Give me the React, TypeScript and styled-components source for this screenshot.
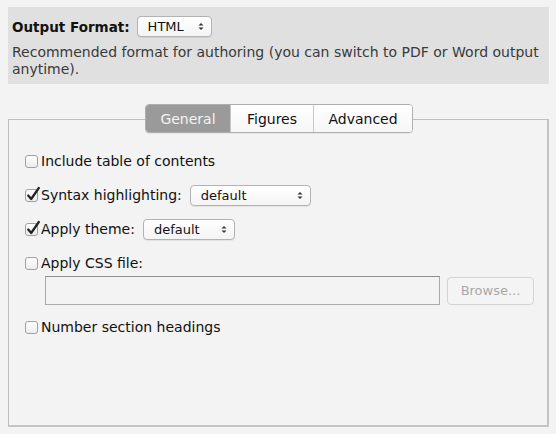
import React from "react";
import styled, { createGlobalStyle } from "styled-components";

const Global = createGlobalStyle`
  html, body { margin: 0; padding: 0; background: #f2f3f2; }
  body { font-family: "DejaVu Sans", "Liberation Sans", sans-serif; font-size: 13px; color: #111; }
`;

const Page = styled.div`
  width: 556px;
  height: 434px;
  padding: 7px 7px 0 8px;
  box-sizing: border-box;
  display: flex;
  flex-direction: column;
`;

const Header = styled.div`
  background: #e0e0e0;
  height: 77px;
  flex-shrink: 0;
  box-sizing: border-box;
  padding: 9px 0 0 4px;
  color: #333;
`;

const FormatRow = styled.div`
  display: flex;
  align-items: center;
  gap: 7px;
  height: 21px;
`;

const BoldLabel = styled.span`
  font-weight: bold;
  color: #111;
  font-size: 13.5px;
`;

const Description = styled.div`
  margin-top: 7px;
  line-height: 17px;
  font-size: 14px;
  color: #3a3a3a;
`;

const SelectBox = styled.div<{ $w: number }>`
  width: ${(p) => p.$w}px;
  height: 21px;
  box-sizing: border-box;
  border: 1px solid #b2b2b2;
  border-radius: 4px;
  background: linear-gradient(#ffffff, #f4f4f4);
  box-shadow: 0 1px 0 rgba(0, 0, 0, 0.06);
  display: flex;
  align-items: center;
  justify-content: space-between;
  padding: 0 7px 0 10px;
  font-size: 13px;
  color: #111;
  font-weight: normal;
`;

const Arrows = () => (
  <svg width="6" height="9" viewBox="0 0 6 9">
    <path d="M0.5 3.5 L3 1 L5.5 3.5 Z" fill="#333" />
    <path d="M0.5 5.5 L3 8 L5.5 5.5 Z" fill="#333" />
  </svg>
);

const Select = ({ w, value }: { w: number; value: string }) => (
  <SelectBox $w={w}>
    <span>{value}</span>
    <Arrows />
  </SelectBox>
);

const TabBar = styled.div`
  margin-top: 20px;
  display: flex;
  justify-content: center;
  position: relative;
  z-index: 1;
  padding-left: 1px;
`;

const TabGroup = styled.div`
  display: flex;
  border: 1px solid #aeaeae;
  border-radius: 4px;
  overflow: hidden;
  height: 29px;
  box-sizing: border-box;
  background: #fff;
  box-shadow: 0 1px 0 rgba(0, 0, 0, 0.05);
`;

const Tab = styled.div<{ $active?: boolean; $w: number }>`
  width: ${(p) => p.$w}px;
  display: flex;
  align-items: center;
  justify-content: center;
  font-size: 14px;
  color: ${(p) => (p.$active ? "#f4f4f4" : "#111")};
  background: ${(p) => (p.$active ? "#9a9a9a" : "linear-gradient(#ffffff, #f6f6f6)")};
  & + & {
    border-left: 1px solid #c8c8c8;
  }
`;

const Pane = styled.div`
  margin-top: -14px;
  height: 308px;
  flex-shrink: 0;
  box-sizing: border-box;
  border: 1px solid #bfbfbf;
  border-right: 2px solid #c4c4c4;
  border-bottom: 2px solid #c4c4c4;
  padding: 30px 0 0 16px;
  display: flex;
  flex-direction: column;
`;

const Row = styled.div`
  display: flex;
  align-items: center;
  height: 22px;
  margin-bottom: 12px;
  font-size: 14px;
  color: #111;
`;

const Box = styled.span`
  width: 13px;
  height: 13px;
  box-sizing: border-box;
  border: 1px solid #a0a0a0;
  border-radius: 3px;
  background: linear-gradient(#ffffff, #ececec);
  position: relative;
  margin-right: 3px;
  flex-shrink: 0;
`;

const Tick = styled.svg`
  position: absolute;
  left: 0px;
  top: -4px;
`;

const CheckBox = ({ checked }: { checked?: boolean }) => (
  <Box>
    {checked && (
      <Tick width="14" height="16" viewBox="0 0 14 16">
        <path d="M2.2 9.5 L5.2 13 L12.8 2" stroke="#222" strokeWidth="2.2" fill="none" strokeLinecap="round" strokeLinejoin="round" />
      </Tick>
    )}
  </Box>
);

const LabelText = styled.span<{ $gap?: number }>`
  margin-right: ${(p) => p.$gap ?? 0}px;
`;

const FileRow = styled.div`
  display: flex;
  align-items: center;
  gap: 7px;
  margin: -10px 0 11px 20px;
  height: 29px;
`;

const FileInput = styled.div`
  width: 395px;
  height: 29px;
  box-sizing: border-box;
  border: 1px solid #a9a9a9;
  border-top-color: #8e8e8e;
  background: #f2f3f2;
`;

const BrowseButton = styled.div`
  width: 87px;
  height: 28px;
  box-sizing: border-box;
  border: 1px solid #d4d4d4;
  border-radius: 4px;
  background: #f4f4f4;
  color: #a8a8a8;
  font-size: 13px;
  display: flex;
  align-items: center;
  justify-content: center;
`;

export default function App() {
  return (
    <>
      <Global />
      <Page>
        <Header>
          <FormatRow>
            <BoldLabel>Output Format:</BoldLabel>
            <Select w={75} value="HTML" />
          </FormatRow>
          <Description>
            Recommended format for authoring (you can switch to PDF or Word output anytime).
          </Description>
        </Header>
        <TabBar>
          <TabGroup>
            <Tab $active $w={84}>General</Tab>
            <Tab $w={82}>Figures</Tab>
            <Tab $w={98}>Advanced</Tab>
          </TabGroup>
        </TabBar>
        <Pane>
          <Row>
            <CheckBox />
            <LabelText>Include table of contents</LabelText>
          </Row>
          <Row>
            <CheckBox checked />
            <LabelText $gap={8}>Syntax highlighting:</LabelText>
            <Select w={121} value="default" />
          </Row>
          <Row>
            <CheckBox checked />
            <LabelText $gap={8}>Apply theme:</LabelText>
            <Select w={92} value="default" />
          </Row>
          <Row>
            <CheckBox />
            <LabelText>Apply CSS file:</LabelText>
          </Row>
          <FileRow>
            <FileInput />
            <BrowseButton>Browse...</BrowseButton>
          </FileRow>
          <Row>
            <CheckBox />
            <LabelText>Number section headings</LabelText>
          </Row>
        </Pane>
      </Page>
    </>
  );
}
